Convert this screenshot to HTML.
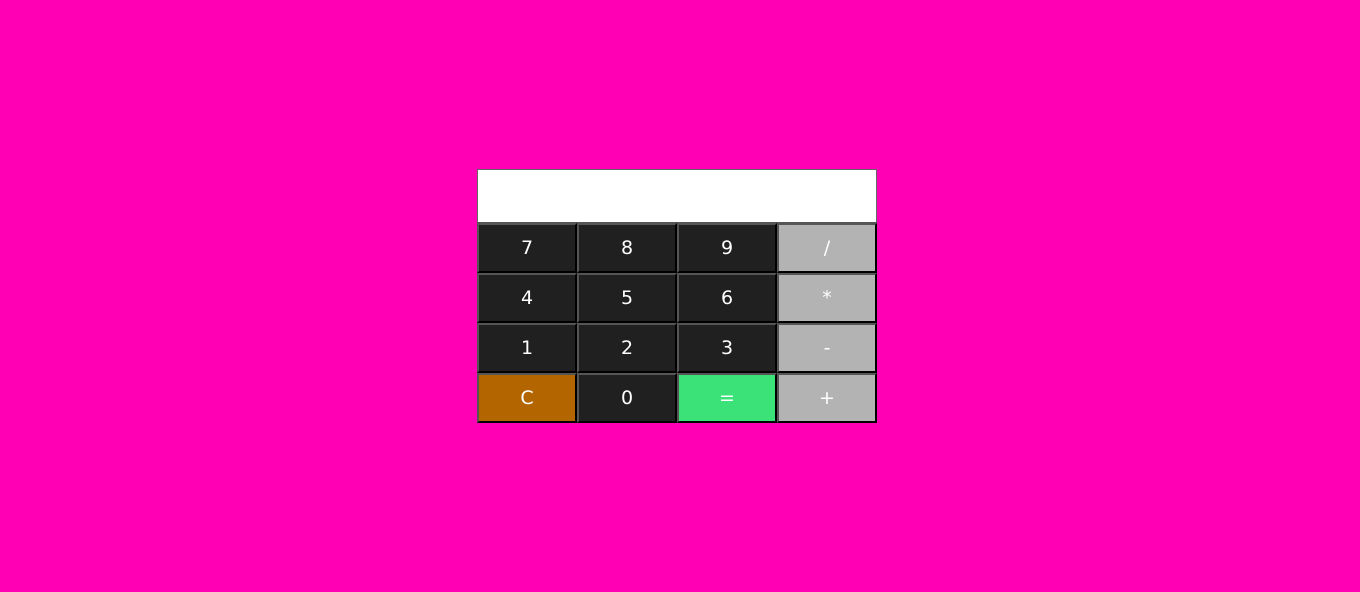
<!DOCTYPE html>
<html><head><style>
body{margin:0;background:#ff00b4;width:1360px;height:592px;position:relative;overflow:hidden;font-family:"DejaVu Sans",sans-serif}
#d{position:absolute;left:477px;top:169px;width:398px;height:52px;background:#fff;border:1px solid #666;border-bottom:1px solid #555}
#g{position:absolute;left:477px;top:223px;width:400px;height:200px}
.b{position:absolute;width:96px;height:46px;border:2px solid;border-color:#555 #000 #000 #555;background:#202020;color:#fff;font-size:19px;line-height:46px;text-align:center}
.o{background:#b3b3b3}.c{background:#b36600}.e{background:#3ae278}
</style></head><body>
<div id="d"></div>
<div id="g">
<div class="b" style="left:0;top:0">7</div><div class="b" style="left:100px;top:0">8</div><div class="b" style="left:200px;top:0">9</div><div class="b o" style="left:300px;top:0">/</div>
<div class="b" style="left:0;top:50px">4</div><div class="b" style="left:100px;top:50px">5</div><div class="b" style="left:200px;top:50px">6</div><div class="b o" style="left:300px;top:50px">*</div>
<div class="b" style="left:0;top:100px">1</div><div class="b" style="left:100px;top:100px">2</div><div class="b" style="left:200px;top:100px">3</div><div class="b o" style="left:300px;top:100px">-</div>
<div class="b c" style="left:0;top:150px">C</div><div class="b" style="left:100px;top:150px">0</div><div class="b e" style="left:200px;top:150px">=</div><div class="b o" style="left:300px;top:150px">+</div>
</div>
</body></html>
